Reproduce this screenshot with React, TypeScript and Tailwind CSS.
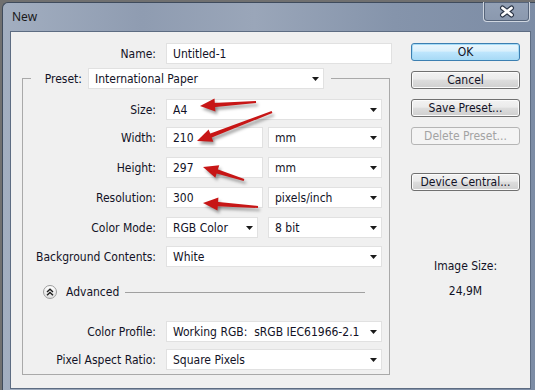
import React from "react";

const Tri = () => (
  <svg width="7" height="4" viewBox="0 0 7 4" className="shrink-0">
    <polygon points="0,0 7,0 3.5,4" fill="#1a1a1a" />
  </svg>
);

const Select = ({ w, text }: { w: string; text: string }) => (
  <div className={`${w} h-[21px] bg-white border border-[#e1e1e1] flex items-center justify-between pl-[6px] pr-[4px]`}>
    <span className="whitespace-pre">{text}</span>
    <Tri />
  </div>
);

const Input = ({ w, text }: { w: string; text: string }) => (
  <div className={`${w} h-[21px] bg-white border border-[#e1e1e1] flex items-center pl-[6px]`}>
    <span>{text}</span>
  </div>
);

const Label = ({ text }: { text: string }) => (
  <div className="w-[134px] text-right pr-px whitespace-nowrap">{text}</div>
);

const Btn = ({ text, cls, primary, disabled }: { text: string; cls?: string; primary?: boolean; disabled?: boolean }) => {
  const base = "w-[109px] h-[18px] rounded-[3px] border flex items-center justify-center whitespace-nowrap";
  const look = primary
    ? "border-[#3c7fb1] bg-[linear-gradient(180deg,#eaf6fd_0%,#d9f0fc_45%,#bee6fd_50%,#a7d9f5_100%)] shadow-[inset_0_0_0_1px_#a6dcf7]"
    : disabled
    ? "border-[#b5b5b5] bg-[#f4f4f4] text-[#a3a3a3]"
    : "border-[#707070] bg-[linear-gradient(180deg,#f2f2f2_0%,#ebebeb_45%,#dddddd_50%,#cfcfcf_100%)] shadow-[inset_0_0_0_1px_#fbfbfb]";
  return <div className={`${base} ${look} ${cls ?? ""}`}>{text}</div>;
};

type Pt = [number, number];
const arrowShapes = (tail: Pt, tip: Pt) => {
  const dx = tip[0] - tail[0];
  const dy = tip[1] - tail[1];
  const len = Math.hypot(dx, dy);
  const ux = dx / len;
  const uy = dy / len;
  const nx = -uy;
  const ny = ux;
  const hl = 15;
  const hw = 6.5;
  const bx = tip[0] - ux * hl;
  const by = tip[1] - uy * hl;
  const head = `${tip[0]},${tip[1]} ${bx + nx * hw},${by + ny * hw} ${bx - nx * hw},${by - ny * hw}`;
  const s0 = 1;
  const s1 = 2.2;
  const ex = bx + ux * 2;
  const ey = by + uy * 2;
  const shaft = `${tail[0] + nx * s0},${tail[1] + ny * s0} ${ex + nx * s1},${ey + ny * s1} ${ex - nx * s1},${ey - ny * s1} ${tail[0] - nx * s0},${tail[1] - ny * s0}`;
  return { head, shaft };
};

const arrows: [Pt, Pt][] = [
  [[256, 102], [200, 106]],
  [[272, 112], [197, 141]],
  [[244, 180], [203, 167]],
  [[258, 207], [203, 203]],
];

export default function App() {
  return (
    <div className="relative w-[535px] h-[390px] overflow-hidden bg-[#707070] pt-[2px] pl-[2px] font-['DejaVu_Sans_Condensed','DejaVu_Sans',sans-serif] text-[12px] text-[#121226]">
      <div className="w-[560px] h-[400px] rounded-tl-[6px] border-l border-t border-[#3f4b5c] bg-[linear-gradient(90deg,#a2aec0_0%,#8f9cb1_25%,#9aa6b9_45%,#8594ab_70%,#7b8ba4_100%)] flex flex-col">
        <div className="h-[28px] flex items-start">
          <div className="w-[40px] shrink-0 pl-[9px] pt-[5px] font-['Noto_Sans',sans-serif] text-[12px] text-[#1a1a1a]">New</div>
          <div className="ml-[440px] shrink-0 -mt-px w-[47px] h-[20px] rounded-b-[4px] border border-t-0 border-[#cfd6e0] bg-[linear-gradient(180deg,#93a1b6,#8a98ae)] shadow-[inset_0_0_0_1px_#56647a] flex items-center justify-center">
            <svg width="16" height="13" viewBox="0 0 16 13">
              <path d="M3.5,3 L12.5,10 M12.5,3 L3.5,10" stroke="#2b3546" strokeWidth="5" strokeLinecap="round" />
              <path d="M3.5,3 L12.5,10 M12.5,3 L3.5,10" stroke="#ffffff" strokeWidth="2.8" strokeLinecap="round" />
            </svg>
          </div>
        </div>
        <div className="ml-[7px] w-[521px] h-[358px] border border-[#5d6c82] bg-[#f0f0f0] flex">
          <div className="flex flex-col pt-[11px]">
            <div className="flex items-center">
              <div className="w-[146px] text-right pr-px">Name:</div>
              <div className="ml-[9px]">
                <Input w="w-[226px]" text="Untitled-1" />
              </div>
            </div>
            <div className="ml-[11px] mt-[4px] w-[368px] flex flex-col">
              <div className="h-[21px] flex items-center">
                <div className="w-[9px] h-[11px] self-end border-l border-t border-[#a9a9a9]" />
                <div className="w-[51px] text-right whitespace-nowrap">Preset:</div>
                <div className="ml-[6px]">
                  <Select w="w-[236px]" text="International Paper" />
                </div>
                <div className="ml-[7px] flex-1 h-[11px] self-end border-t border-r border-[#a9a9a9]" />
              </div>
              <div className="border-l border-r border-b border-[#a9a9a9] flex flex-col pt-[10px] pb-[4px]">
                <div className="flex items-center">
                  <Label text="Size:" />
                  <div className="ml-[9px]"><Select w="w-[216px]" text="A4" /></div>
                </div>
                <div className="flex items-center mt-[7px]">
                  <Label text="Width:" />
                  <div className="ml-[9px]"><Input w="w-[97px]" text="210" /></div>
                  <div className="ml-[5px]"><Select w="w-[114px]" text="mm" /></div>
                </div>
                <div className="flex items-center mt-[9px]">
                  <Label text="Height:" />
                  <div className="ml-[9px]"><Input w="w-[97px]" text="297" /></div>
                  <div className="ml-[5px]"><Select w="w-[114px]" text="mm" /></div>
                </div>
                <div className="flex items-center mt-[9px]">
                  <Label text="Resolution:" />
                  <div className="ml-[9px]"><Input w="w-[97px]" text="300" /></div>
                  <div className="ml-[5px]"><Select w="w-[114px]" text="pixels/inch" /></div>
                </div>
                <div className="flex items-center mt-[9px]">
                  <Label text="Color Mode:" />
                  <div className="ml-[9px]"><Select w="w-[92px]" text="RGB Color" /></div>
                  <div className="ml-[10px]"><Select w="w-[114px]" text="8 bit" /></div>
                </div>
                <div className="flex items-center mt-[8px]">
                  <Label text="Background Contents:" />
                  <div className="ml-[9px]"><Select w="w-[216px]" text="White" /></div>
                </div>
                <div className="flex items-center mt-[17px] h-[16px]">
                  <div className="ml-[20px] w-[14px] h-[14px] rounded-full border border-[#9c9c9c] bg-[linear-gradient(180deg,#ffffff,#dedede)] flex items-center justify-center">
                    <svg width="8" height="8" viewBox="0 0 8 8">
                      <polyline points="1,4 4,1.2 7,4" fill="none" stroke="#1e1e1e" strokeWidth="1.4" />
                      <polyline points="1,7.3 4,4.5 7,7.3" fill="none" stroke="#1e1e1e" strokeWidth="1.4" />
                    </svg>
                  </div>
                  <div className="ml-[9px]">Advanced</div>
                  <div className="ml-[6px] w-[240px] h-px bg-[#a0a0a0]" />
                </div>
                <div className="flex items-center mt-[21px]">
                  <Label text="Color Profile:" />
                  <div className="ml-[9px]"><Select w="w-[216px]" text="Working RGB:  sRGB IEC61966-2.1" /></div>
                </div>
                <div className="flex items-center mt-[7px]">
                  <Label text="Pixel Aspect Ratio:" />
                  <div className="ml-[9px]"><Select w="w-[216px]" text="Square Pixels" /></div>
                </div>
              </div>
            </div>
          </div>
          <div className="ml-[19px] pt-[11px] flex flex-col w-[109px]">
            <Btn text="OK" primary />
            <Btn text="Cancel" cls="mt-[10px]" />
            <Btn text="Save Preset..." cls="mt-[10px]" />
            <Btn text="Delete Preset..." cls="mt-[10px]" disabled />
            <Btn text="Device Central..." cls="mt-[28px]" />
            <div className="mt-[68px] h-[14px] leading-[14px] text-center">Image Size:</div>
            <div className="mt-[11px] h-[14px] leading-[14px] text-center">24,9M</div>
          </div>
        </div>
      </div>
      <svg className="absolute left-0 top-0 pointer-events-none" width="535" height="390" viewBox="0 0 535 390">
        <defs>
          <filter id="sh" x="-20%" y="-50%" width="140%" height="200%">
            <feGaussianBlur stdDeviation="1.6" />
          </filter>
        </defs>
        {arrows.map(([tail, tip], i) => {
          const { head, shaft } = arrowShapes(tail, tip);
          return (
            <g key={i}>
              <g transform="translate(2,3)" filter="url(#sh)" fill="rgba(0,0,0,0.35)">
                <polygon points={shaft} />
                <polygon points={head} />
              </g>
              <g fill="#c71616">
                <polygon points={shaft} />
                <polygon points={head} />
              </g>
            </g>
          );
        })}
      </svg>
    </div>
  );
}
